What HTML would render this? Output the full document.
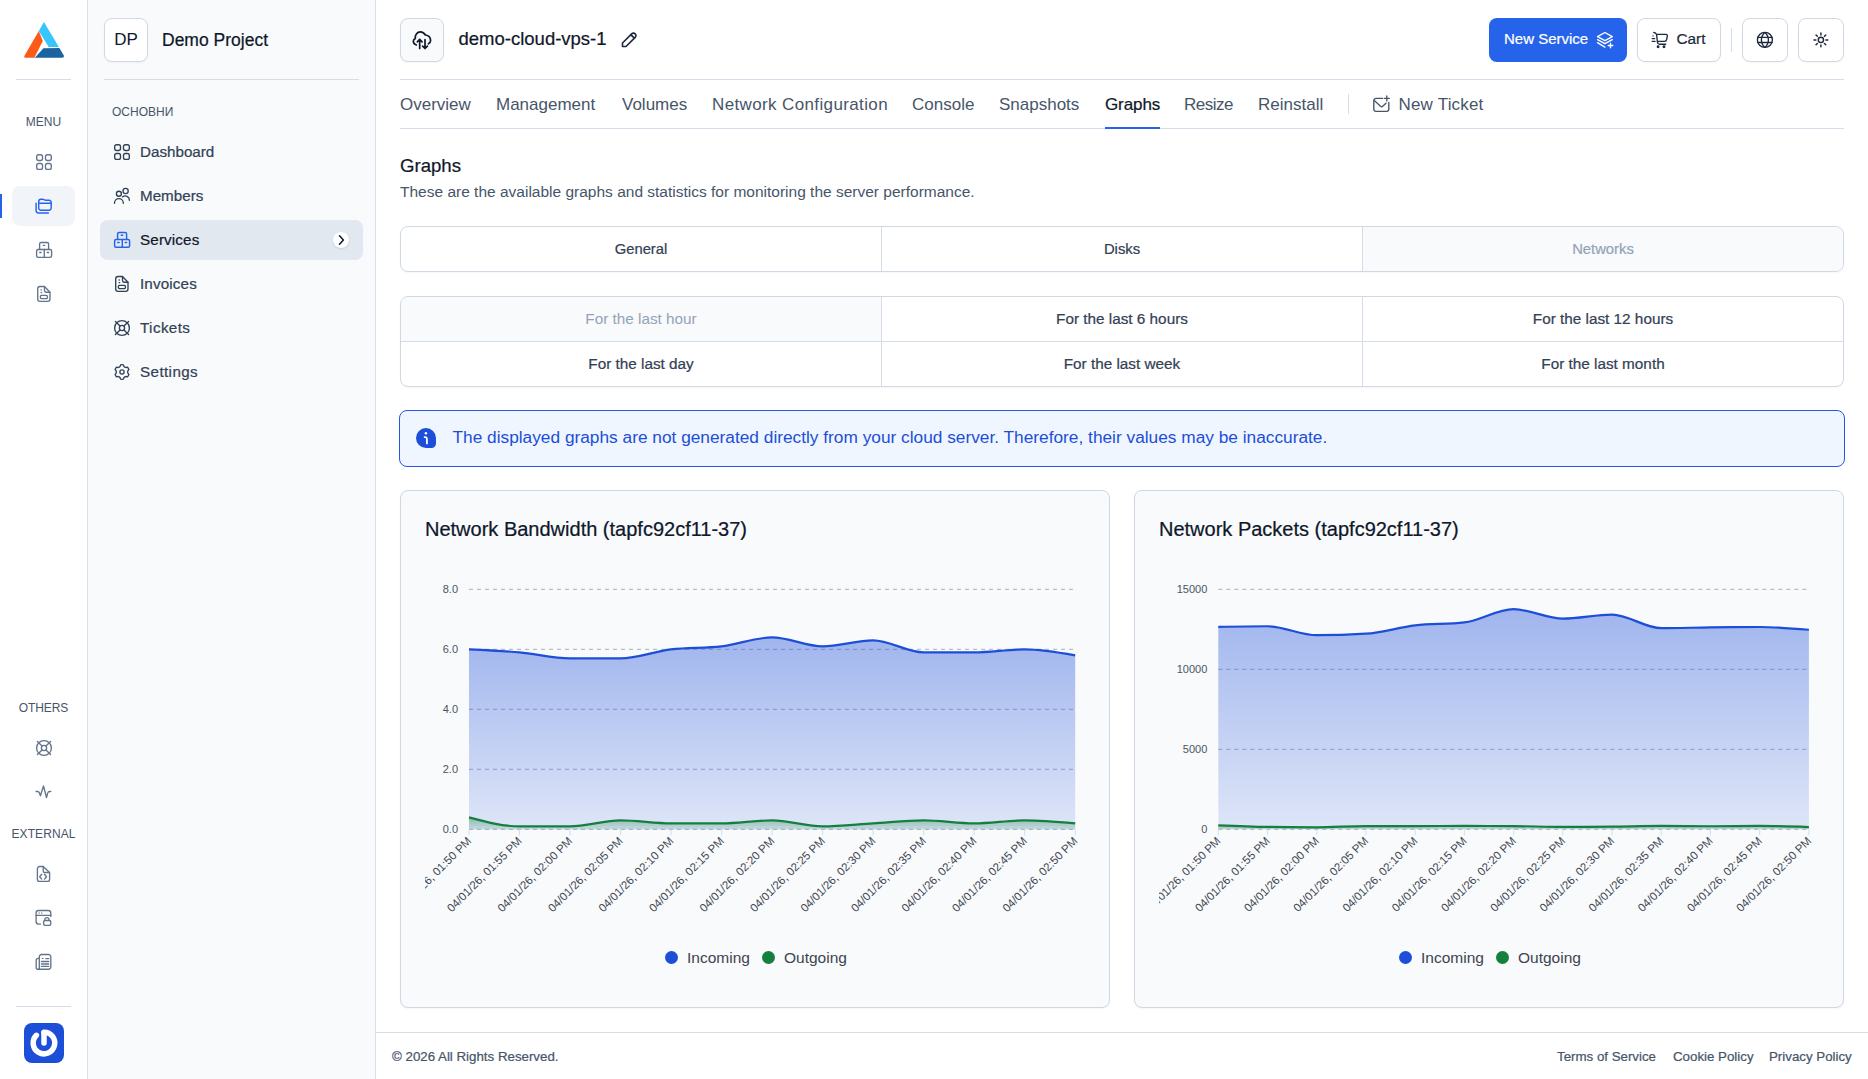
<!DOCTYPE html>
<html><head><meta charset="utf-8">
<style>
*{box-sizing:border-box;margin:0;padding:0}
html,body{width:1868px;height:1079px;overflow:hidden;background:#fff}
body{position:relative;font-family:"Liberation Sans",sans-serif;color:#334155}
.a{position:absolute}
.t{position:absolute;white-space:pre;line-height:1}
.med{-webkit-text-stroke:0.22px currentColor}
svg.i{position:absolute;fill:none;stroke:currentColor;stroke-width:2;stroke-linecap:round;stroke-linejoin:round;overflow:visible}
#rail{left:0;top:0;width:88px;height:1079px;background:#fff;border-right:1px solid #d8e0ea}
#side{left:88px;top:0;width:288px;height:1079px;background:#f8fafc;border-right:1px solid #d8e0ea}
.hr{position:absolute;height:1px;background:#d5dde8}
.vr{position:absolute;width:1px;background:#d5dde8}
.box{position:absolute;border:1px solid #cfd8e3;border-radius:8px;box-shadow:0 1px 2px rgba(15,23,42,0.04)}
.rl{color:#475569;font-size:12px;letter-spacing:0.1px;text-align:center;width:87px;left:0}
.ri{color:#64748b}
.nav{font-size:15.2px;color:#334155;left:52px}
.tab{font-size:17px;color:#475569;top:95.7px}
.cell{position:absolute;display:flex;align-items:center;justify-content:center;font-size:15.3px;color:#334155}
.card{position:absolute;background:#f8fafc;border:1px solid #cfd7e2;border-radius:8px;box-shadow:0 1px 2px rgba(15,23,42,0.04)}
.ctitle{font-size:20px;color:#0f172a}
.ylab{font-family:"Liberation Sans",sans-serif;font-size:11px;fill:#4b5563}
.xlab{font-family:"Liberation Sans",sans-serif;font-size:11.5px;fill:#3f4752}
.dot{position:absolute;width:13px;height:13px;border-radius:50%}
.leg{font-size:15.5px;color:#3d4451}
.foot{font-size:13.3px;color:#475569;top:1049.5px}
</style></head><body>

<!-- ============ RAIL ============ -->
<div id="rail" class="a">
  <svg class="a" style="left:0;top:0" width="88" height="80" viewBox="0 0 88 80">
    <path d="M38.8 31 L42.8 41 L34.3 57.8 L25.4 57.8 Q23.6 57.6 24.3 55.9 Z" fill="#fe5a17"/>
    <path d="M43.9 21.9 L58.9 47.1 L48.7 47 L38.8 31 Z" fill="#36c5fc"/>
    <path d="M43.4 48.2 L59.4 48 L63.8 55.6 Q64.3 57.8 62 57.8 L34.8 57.8 Z" fill="#1b63a0"/>
  </svg>
  <div class="hr" style="left:16px;top:79px;width:55px"></div>
  <div class="t rl" style="top:115.5px">MENU</div>
  <div class="a" style="left:0;top:194px;width:2px;height:24px;background:#2563eb"></div>
  <div class="a" style="left:12px;top:186px;width:63px;height:40px;border-radius:8px;background:#f1f5f9"></div>
  <div class="t rl" style="top:702px;letter-spacing:-0.1px">OTHERS</div>
  <div class="t rl" style="top:828px">EXTERNAL</div>
  <div class="hr" style="left:16px;top:1006px;width:55px"></div>
  <div class="a" style="left:24px;top:1023px;width:40px;height:40px;border-radius:8px;background:#1d4ed8"></div>
  <svg class="a" style="left:24px;top:1023px" width="40" height="40" viewBox="0 0 40 40"><path d="M20 9.2 A10.8 10.8 0 1 1 12.4 12.3" fill="none" stroke="#fff" stroke-width="5.5" stroke-linecap="round"/><path d="M20 9.5 V20" stroke="#fff" stroke-width="5.5" stroke-linecap="round"/></svg>
</div>

<!-- ============ SIDEBAR ============ -->
<div id="side" class="a">
  <div class="box" style="left:16px;top:18px;width:44px;height:44px;background:#fff"></div>
  <div class="t" style="left:16px;top:31px;width:44px;text-align:center;font-size:17px;color:#0f172a">DP</div>
  <div class="t med" style="left:74px;top:32px;font-size:17.5px;color:#0f172a">Demo Project</div>
  <div class="hr" style="left:16px;top:79px;width:255px"></div>
  <div class="t" style="left:24px;top:105.6px;font-size:12px;color:#475569">ОСНОВНИ</div>
  <div class="a" style="left:12px;top:220px;width:263px;height:40px;border-radius:8px;background:#e2e8f0"></div>
  <div class="a" style="left:245px;top:232px;width:16px;height:16px;border-radius:50%;background:#fff;box-shadow:0 1px 2px rgba(15,23,42,.12)"></div>
  <svg class="a" style="left:239px;top:226px" width="28" height="28" viewBox="0 0 28 28" fill="none" stroke="#0f172a" stroke-width="1.5" stroke-linecap="round" stroke-linejoin="round"><path d="M12.5 9.8l3.9 4.2l-3.9 4.2"/></svg>
  <div class="t nav med" style="top:144.4px">Dashboard</div>
  <div class="t nav med" style="top:188.4px">Members</div>
  <div class="t nav med" style="top:232.4px;color:#0f172a;letter-spacing:0.15px">Services</div>
  <div class="t nav med" style="top:276.4px;letter-spacing:0.15px">Invoices</div>
  <div class="t nav med" style="top:320.4px;letter-spacing:0.4px">Tickets</div>
  <div class="t nav med" style="top:364.4px;letter-spacing:0.4px">Settings</div>
</div>


<!-- ============ HEADER ============ -->
<div class="box" style="left:400px;top:18px;width:44px;height:44px;background:#f8fafc"></div>
<div class="t med" style="left:458.5px;top:30px;font-size:18.5px;color:#0f172a">demo-cloud-vps-1</div>

<div class="a" style="left:1489px;top:18px;width:138px;height:44px;border-radius:8px;background:#2563eb"></div>
<div class="t med" style="left:1504px;top:30.8px;font-size:15px;color:#fff">New Service</div>
<div class="box" style="left:1637px;top:18px;width:84px;height:44px;background:#fff"></div>
<div class="t med" style="left:1676.5px;top:30.8px;font-size:15.3px;color:#1e293b">Cart</div>
<div class="vr" style="left:1731px;top:28px;height:24px"></div>
<div class="box" style="left:1742px;top:18px;width:46px;height:44px;background:#fff"></div>
<div class="box" style="left:1798px;top:18px;width:46px;height:44px;background:#fff"></div>
<div class="hr" style="left:400px;top:79px;width:1444px"></div>

<!-- ============ TABS ============ -->
<div class="t tab" style="left:400px">Overview</div>
<div class="t tab" style="left:496px">Management</div>
<div class="t tab" style="left:622px">Volumes</div>
<div class="t tab" style="left:712px;letter-spacing:0.37px">Network Configuration</div>
<div class="t tab" style="left:912px">Console</div>
<div class="t tab" style="left:999px">Snapshots</div>
<div class="t tab med" style="left:1105px;color:#0f172a;letter-spacing:-0.1px">Graphs</div>
<div class="t tab" style="left:1184px;letter-spacing:-0.5px">Resize</div>
<div class="t tab" style="left:1258px">Reinstall</div>
<div class="vr" style="left:1348px;top:94px;height:20px"></div>
<div class="t tab" style="left:1398.5px;letter-spacing:0.19px">New Ticket</div>
<div class="hr" style="left:400px;top:128px;width:1444px"></div>
<div class="a" style="left:1105px;top:127px;width:55px;height:2px;background:#2563eb"></div>

<!-- ============ CONTENT ============ -->
<div class="t med" style="left:400px;top:156.6px;font-size:18.6px;color:#0f172a">Graphs</div>
<div class="t" style="left:400px;top:184.3px;font-size:15.5px;color:#475569">These are the available graphs and statistics for monitoring the server performance.</div>

<div class="box" style="left:400px;top:226px;width:1444px;height:46px;overflow:hidden">
  <div class="cell med" style="left:0;top:0;width:480px;height:44px;font-size:14.8px">General</div>
  <div class="vr" style="left:480px;top:0;height:44px"></div>
  <div class="cell med" style="left:481px;top:0;width:480px;height:44px;font-size:14.8px">Disks</div>
  <div class="vr" style="left:961px;top:0;height:44px"></div>
  <div class="cell med" style="left:962px;top:0;width:480px;height:44px;background:#f8fafc;color:#94a3b8;font-size:14.8px">Networks</div>
</div>

<div class="box" style="left:400px;top:296px;width:1444px;height:91px;overflow:hidden">
  <div class="cell" style="left:0;top:0;width:480px;height:44px;background:#f8fafc;color:#94a3b8">For the last hour</div>
  <div class="cell med" style="left:481px;top:0;width:480px;height:44px">For the last 6 hours</div>
  <div class="cell med" style="left:962px;top:0;width:480px;height:44px">For the last 12 hours</div>
  <div class="cell med" style="left:0;top:45px;width:480px;height:44px">For the last day</div>
  <div class="cell med" style="left:481px;top:45px;width:480px;height:44px">For the last week</div>
  <div class="cell med" style="left:962px;top:45px;width:480px;height:44px">For the last month</div>
  <div class="hr" style="left:0;top:44px;width:1444px"></div>
  <div class="vr" style="left:480px;top:0;height:90px"></div>
  <div class="vr" style="left:961px;top:0;height:90px"></div>
</div>

<div class="a" style="left:399px;top:410px;width:1446px;height:57px;border:1px solid #2558e2;border-radius:8px;background:#eff6ff"></div>
<svg class="a" style="left:416px;top:428px" width="20" height="20" viewBox="0 0 20 20"><path d="M0 10A10 10 0 0 1 20 10V15.5A4.5 4.5 0 0 1 15.5 20H10A10 10 0 0 1 0 10Z" fill="#1d4ed8"/><circle cx="9.9" cy="5.3" r="1.25" fill="#fff"/><path d="M8.6 9.2Q10.9 9 10.9 11V15.4" fill="none" stroke="#fff" stroke-width="1.8" stroke-linecap="round" stroke-linejoin="round"/></svg>
<div class="t" style="left:452.5px;top:429.3px;font-size:17.3px;color:#1d4ed8">The displayed graphs are not generated directly from your cloud server. Therefore, their values may be inaccurate.</div>

<!--CHARTS-->
<div class="card" style="left:400px;top:490px;width:710px;height:518px"></div>
<div class="t med ctitle" style="left:425px;top:519px">Network Bandwidth (tapfc92cf11-37)</div>
<svg class="a" style="left:400px;top:490px;overflow:hidden" width="710" height="518" viewBox="0 0 710 518">
<defs><linearGradient id="gi1" x1="0" y1="0" x2="0" y2="1"><stop offset="0" stop-color="#1d4ed8" stop-opacity="0.40"/><stop offset="1" stop-color="#1d4ed8" stop-opacity="0.12"/></linearGradient><linearGradient id="go1" x1="0" y1="0" x2="0" y2="1"><stop offset="0" stop-color="#15803d" stop-opacity="0.40"/><stop offset="1" stop-color="#15803d" stop-opacity="0.12"/></linearGradient><clipPath id="cl1"><rect x="25" y="0" width="660" height="518"/></clipPath></defs>
<line x1="69.0" y1="99.40" x2="673.2" y2="99.40" stroke="#b6bfcc" stroke-width="1.3" stroke-dasharray="4 4"/>
<text x="58.0" y="103.40" text-anchor="end" class="ylab">8.0</text>
<line x1="69.0" y1="159.40" x2="673.2" y2="159.40" stroke="#b6bfcc" stroke-width="1.3" stroke-dasharray="4 4"/>
<text x="58.0" y="163.40" text-anchor="end" class="ylab">6.0</text>
<line x1="69.0" y1="219.40" x2="673.2" y2="219.40" stroke="#b6bfcc" stroke-width="1.3" stroke-dasharray="4 4"/>
<text x="58.0" y="223.40" text-anchor="end" class="ylab">4.0</text>
<line x1="69.0" y1="279.40" x2="673.2" y2="279.40" stroke="#b6bfcc" stroke-width="1.3" stroke-dasharray="4 4"/>
<text x="58.0" y="283.40" text-anchor="end" class="ylab">2.0</text>
<line x1="69.0" y1="339.40" x2="673.2" y2="339.40" stroke="#b6bfcc" stroke-width="1.3" stroke-dasharray="4 4"/>
<text x="58.0" y="343.40" text-anchor="end" class="ylab">0.0</text>
<path d="M69.00,159.40C85.84,160.15 102.68,160.90 119.52,162.40C136.36,163.90 153.19,168.40 170.03,168.40C186.87,168.40 203.71,168.40 220.55,168.40C237.39,168.40 254.23,161.40 271.07,159.40C287.91,157.40 304.74,158.40 321.58,156.40C338.42,154.40 355.26,147.40 372.10,147.40C388.94,147.40 405.78,156.40 422.62,156.40C439.46,156.40 456.29,150.40 473.13,150.40C489.97,150.40 506.81,162.40 523.65,162.40C540.49,162.40 557.33,162.40 574.17,162.40C591.01,162.40 607.84,159.40 624.68,159.40C641.52,159.40 658.36,162.40 675.20,165.40L675.20,339.40L69.00,339.40Z" fill="url(#gi1)"/>
<path d="M69.00,327.40C85.84,331.90 102.68,336.40 119.52,336.40C136.36,336.40 153.19,336.40 170.03,336.40C186.87,336.40 203.71,330.40 220.55,330.40C237.39,330.40 254.23,333.40 271.07,333.40C287.91,333.40 304.74,333.40 321.58,333.40C338.42,333.40 355.26,330.40 372.10,330.40C388.94,330.40 405.78,336.40 422.62,336.40C439.46,336.40 456.29,334.40 473.13,333.40C489.97,332.40 506.81,330.40 523.65,330.40C540.49,330.40 557.33,333.40 574.17,333.40C591.01,333.40 607.84,330.40 624.68,330.40C641.52,330.40 658.36,331.90 675.20,333.40L675.20,339.40L69.00,339.40Z" fill="url(#go1)"/>
<path d="M69.00,159.40C85.84,160.15 102.68,160.90 119.52,162.40C136.36,163.90 153.19,168.40 170.03,168.40C186.87,168.40 203.71,168.40 220.55,168.40C237.39,168.40 254.23,161.40 271.07,159.40C287.91,157.40 304.74,158.40 321.58,156.40C338.42,154.40 355.26,147.40 372.10,147.40C388.94,147.40 405.78,156.40 422.62,156.40C439.46,156.40 456.29,150.40 473.13,150.40C489.97,150.40 506.81,162.40 523.65,162.40C540.49,162.40 557.33,162.40 574.17,162.40C591.01,162.40 607.84,159.40 624.68,159.40C641.52,159.40 658.36,162.40 675.20,165.40" fill="none" stroke="#1d4ed8" stroke-width="2.2"/>
<path d="M69.00,327.40C85.84,331.90 102.68,336.40 119.52,336.40C136.36,336.40 153.19,336.40 170.03,336.40C186.87,336.40 203.71,330.40 220.55,330.40C237.39,330.40 254.23,333.40 271.07,333.40C287.91,333.40 304.74,333.40 321.58,333.40C338.42,333.40 355.26,330.40 372.10,330.40C388.94,330.40 405.78,336.40 422.62,336.40C439.46,336.40 456.29,334.40 473.13,333.40C489.97,332.40 506.81,330.40 523.65,330.40C540.49,330.40 557.33,333.40 574.17,333.40C591.01,333.40 607.84,330.40 624.68,330.40C641.52,330.40 658.36,331.90 675.20,333.40" fill="none" stroke="#15803d" stroke-width="2.2"/>
<g clip-path="url(#cl1)">
<line x1="69.00" y1="339.4" x2="69.00" y2="345.4" stroke="#d8dde5" stroke-width="1"/>
<text transform="translate(72.10,351.70) rotate(-45)" text-anchor="end" class="xlab">04/01/26, 01:50 PM</text>
<line x1="119.52" y1="339.4" x2="119.52" y2="345.4" stroke="#d8dde5" stroke-width="1"/>
<text transform="translate(122.62,351.70) rotate(-45)" text-anchor="end" class="xlab">04/01/26, 01:55 PM</text>
<line x1="170.03" y1="339.4" x2="170.03" y2="345.4" stroke="#d8dde5" stroke-width="1"/>
<text transform="translate(173.13,351.70) rotate(-45)" text-anchor="end" class="xlab">04/01/26, 02:00 PM</text>
<line x1="220.55" y1="339.4" x2="220.55" y2="345.4" stroke="#d8dde5" stroke-width="1"/>
<text transform="translate(223.65,351.70) rotate(-45)" text-anchor="end" class="xlab">04/01/26, 02:05 PM</text>
<line x1="271.07" y1="339.4" x2="271.07" y2="345.4" stroke="#d8dde5" stroke-width="1"/>
<text transform="translate(274.17,351.70) rotate(-45)" text-anchor="end" class="xlab">04/01/26, 02:10 PM</text>
<line x1="321.58" y1="339.4" x2="321.58" y2="345.4" stroke="#d8dde5" stroke-width="1"/>
<text transform="translate(324.68,351.70) rotate(-45)" text-anchor="end" class="xlab">04/01/26, 02:15 PM</text>
<line x1="372.10" y1="339.4" x2="372.10" y2="345.4" stroke="#d8dde5" stroke-width="1"/>
<text transform="translate(375.20,351.70) rotate(-45)" text-anchor="end" class="xlab">04/01/26, 02:20 PM</text>
<line x1="422.62" y1="339.4" x2="422.62" y2="345.4" stroke="#d8dde5" stroke-width="1"/>
<text transform="translate(425.72,351.70) rotate(-45)" text-anchor="end" class="xlab">04/01/26, 02:25 PM</text>
<line x1="473.13" y1="339.4" x2="473.13" y2="345.4" stroke="#d8dde5" stroke-width="1"/>
<text transform="translate(476.23,351.70) rotate(-45)" text-anchor="end" class="xlab">04/01/26, 02:30 PM</text>
<line x1="523.65" y1="339.4" x2="523.65" y2="345.4" stroke="#d8dde5" stroke-width="1"/>
<text transform="translate(526.75,351.70) rotate(-45)" text-anchor="end" class="xlab">04/01/26, 02:35 PM</text>
<line x1="574.17" y1="339.4" x2="574.17" y2="345.4" stroke="#d8dde5" stroke-width="1"/>
<text transform="translate(577.27,351.70) rotate(-45)" text-anchor="end" class="xlab">04/01/26, 02:40 PM</text>
<line x1="624.68" y1="339.4" x2="624.68" y2="345.4" stroke="#d8dde5" stroke-width="1"/>
<text transform="translate(627.78,351.70) rotate(-45)" text-anchor="end" class="xlab">04/01/26, 02:45 PM</text>
<line x1="675.20" y1="339.4" x2="675.20" y2="345.4" stroke="#d8dde5" stroke-width="1"/>
<text transform="translate(678.30,351.70) rotate(-45)" text-anchor="end" class="xlab">04/01/26, 02:50 PM</text>
</g>
</svg>
<div class="dot" style="left:664.5px;top:951px;background:#1d4ed8"></div>
<div class="t leg" style="left:687px;top:950px">Incoming</div>
<div class="dot" style="left:761.5px;top:951px;background:#15803d"></div>
<div class="t leg" style="left:784px;top:950px">Outgoing</div>
<div class="card" style="left:1134px;top:490px;width:710px;height:518px"></div>
<div class="t med ctitle" style="left:1159px;top:519px">Network Packets (tapfc92cf11-37)</div>
<svg class="a" style="left:1134px;top:490px;overflow:hidden" width="710" height="518" viewBox="0 0 710 518">
<defs><linearGradient id="gi2" x1="0" y1="0" x2="0" y2="1"><stop offset="0" stop-color="#1d4ed8" stop-opacity="0.40"/><stop offset="1" stop-color="#1d4ed8" stop-opacity="0.12"/></linearGradient><linearGradient id="go2" x1="0" y1="0" x2="0" y2="1"><stop offset="0" stop-color="#15803d" stop-opacity="0.40"/><stop offset="1" stop-color="#15803d" stop-opacity="0.12"/></linearGradient><clipPath id="cl2"><rect x="25" y="0" width="660" height="518"/></clipPath></defs>
<line x1="84.3" y1="99.30" x2="672.9" y2="99.30" stroke="#b6bfcc" stroke-width="1.3" stroke-dasharray="4 4"/>
<text x="73.3" y="103.30" text-anchor="end" class="ylab">15000</text>
<line x1="84.3" y1="179.30" x2="672.9" y2="179.30" stroke="#b6bfcc" stroke-width="1.3" stroke-dasharray="4 4"/>
<text x="73.3" y="183.30" text-anchor="end" class="ylab">10000</text>
<line x1="84.3" y1="259.30" x2="672.9" y2="259.30" stroke="#b6bfcc" stroke-width="1.3" stroke-dasharray="4 4"/>
<text x="73.3" y="263.30" text-anchor="end" class="ylab">5000</text>
<line x1="84.3" y1="339.30" x2="672.9" y2="339.30" stroke="#b6bfcc" stroke-width="1.3" stroke-dasharray="4 4"/>
<text x="73.3" y="343.30" text-anchor="end" class="ylab">0</text>
<path d="M84.30,136.90C100.71,136.58 117.11,136.26 133.52,136.26C149.92,136.26 166.33,145.22 182.73,145.22C199.14,145.22 215.54,144.71 231.95,143.70C248.36,142.69 264.76,137.26 281.17,135.38C297.57,133.50 313.98,134.39 330.38,132.42C346.79,130.45 363.19,119.14 379.60,119.14C396.01,119.14 412.41,128.58 428.82,128.58C445.22,128.58 461.63,124.58 478.03,124.58C494.44,124.58 510.84,138.18 527.25,138.18C543.66,138.18 560.06,137.58 576.47,137.38C592.87,137.18 609.28,136.98 625.68,136.98C642.09,136.98 658.49,138.38 674.90,139.78L674.90,339.30L84.30,339.30Z" fill="url(#gi2)"/>
<path d="M84.30,335.30C100.71,335.97 117.11,336.63 133.52,336.90C149.92,337.17 166.33,337.30 182.73,337.30C199.14,337.30 215.54,336.10 231.95,336.10C248.36,336.10 264.76,336.10 281.17,336.10C297.57,336.10 313.98,335.94 330.38,335.94C346.79,335.94 363.19,335.99 379.60,336.10C396.01,336.21 412.41,336.90 428.82,336.90C445.22,336.90 461.63,336.74 478.03,336.58C494.44,336.42 510.84,335.94 527.25,335.94C543.66,335.94 560.06,336.26 576.47,336.26C592.87,336.26 609.28,335.94 625.68,335.94C642.09,335.94 658.49,336.50 674.90,337.06L674.90,339.30L84.30,339.30Z" fill="url(#go2)"/>
<path d="M84.30,136.90C100.71,136.58 117.11,136.26 133.52,136.26C149.92,136.26 166.33,145.22 182.73,145.22C199.14,145.22 215.54,144.71 231.95,143.70C248.36,142.69 264.76,137.26 281.17,135.38C297.57,133.50 313.98,134.39 330.38,132.42C346.79,130.45 363.19,119.14 379.60,119.14C396.01,119.14 412.41,128.58 428.82,128.58C445.22,128.58 461.63,124.58 478.03,124.58C494.44,124.58 510.84,138.18 527.25,138.18C543.66,138.18 560.06,137.58 576.47,137.38C592.87,137.18 609.28,136.98 625.68,136.98C642.09,136.98 658.49,138.38 674.90,139.78" fill="none" stroke="#1d4ed8" stroke-width="2.2"/>
<path d="M84.30,335.30C100.71,335.97 117.11,336.63 133.52,336.90C149.92,337.17 166.33,337.30 182.73,337.30C199.14,337.30 215.54,336.10 231.95,336.10C248.36,336.10 264.76,336.10 281.17,336.10C297.57,336.10 313.98,335.94 330.38,335.94C346.79,335.94 363.19,335.99 379.60,336.10C396.01,336.21 412.41,336.90 428.82,336.90C445.22,336.90 461.63,336.74 478.03,336.58C494.44,336.42 510.84,335.94 527.25,335.94C543.66,335.94 560.06,336.26 576.47,336.26C592.87,336.26 609.28,335.94 625.68,335.94C642.09,335.94 658.49,336.50 674.90,337.06" fill="none" stroke="#15803d" stroke-width="2.2"/>
<g clip-path="url(#cl2)">
<line x1="84.30" y1="339.3" x2="84.30" y2="345.3" stroke="#d8dde5" stroke-width="1"/>
<text transform="translate(87.40,351.60) rotate(-45)" text-anchor="end" class="xlab">04/01/26, 01:50 PM</text>
<line x1="133.52" y1="339.3" x2="133.52" y2="345.3" stroke="#d8dde5" stroke-width="1"/>
<text transform="translate(136.62,351.60) rotate(-45)" text-anchor="end" class="xlab">04/01/26, 01:55 PM</text>
<line x1="182.73" y1="339.3" x2="182.73" y2="345.3" stroke="#d8dde5" stroke-width="1"/>
<text transform="translate(185.83,351.60) rotate(-45)" text-anchor="end" class="xlab">04/01/26, 02:00 PM</text>
<line x1="231.95" y1="339.3" x2="231.95" y2="345.3" stroke="#d8dde5" stroke-width="1"/>
<text transform="translate(235.05,351.60) rotate(-45)" text-anchor="end" class="xlab">04/01/26, 02:05 PM</text>
<line x1="281.17" y1="339.3" x2="281.17" y2="345.3" stroke="#d8dde5" stroke-width="1"/>
<text transform="translate(284.27,351.60) rotate(-45)" text-anchor="end" class="xlab">04/01/26, 02:10 PM</text>
<line x1="330.38" y1="339.3" x2="330.38" y2="345.3" stroke="#d8dde5" stroke-width="1"/>
<text transform="translate(333.48,351.60) rotate(-45)" text-anchor="end" class="xlab">04/01/26, 02:15 PM</text>
<line x1="379.60" y1="339.3" x2="379.60" y2="345.3" stroke="#d8dde5" stroke-width="1"/>
<text transform="translate(382.70,351.60) rotate(-45)" text-anchor="end" class="xlab">04/01/26, 02:20 PM</text>
<line x1="428.82" y1="339.3" x2="428.82" y2="345.3" stroke="#d8dde5" stroke-width="1"/>
<text transform="translate(431.92,351.60) rotate(-45)" text-anchor="end" class="xlab">04/01/26, 02:25 PM</text>
<line x1="478.03" y1="339.3" x2="478.03" y2="345.3" stroke="#d8dde5" stroke-width="1"/>
<text transform="translate(481.13,351.60) rotate(-45)" text-anchor="end" class="xlab">04/01/26, 02:30 PM</text>
<line x1="527.25" y1="339.3" x2="527.25" y2="345.3" stroke="#d8dde5" stroke-width="1"/>
<text transform="translate(530.35,351.60) rotate(-45)" text-anchor="end" class="xlab">04/01/26, 02:35 PM</text>
<line x1="576.47" y1="339.3" x2="576.47" y2="345.3" stroke="#d8dde5" stroke-width="1"/>
<text transform="translate(579.57,351.60) rotate(-45)" text-anchor="end" class="xlab">04/01/26, 02:40 PM</text>
<line x1="625.68" y1="339.3" x2="625.68" y2="345.3" stroke="#d8dde5" stroke-width="1"/>
<text transform="translate(628.78,351.60) rotate(-45)" text-anchor="end" class="xlab">04/01/26, 02:45 PM</text>
<line x1="674.90" y1="339.3" x2="674.90" y2="345.3" stroke="#d8dde5" stroke-width="1"/>
<text transform="translate(678.00,351.60) rotate(-45)" text-anchor="end" class="xlab">04/01/26, 02:50 PM</text>
</g>
</svg>
<div class="dot" style="left:1398.5px;top:951px;background:#1d4ed8"></div>
<div class="t leg" style="left:1421px;top:950px">Incoming</div>
<div class="dot" style="left:1495.5px;top:951px;background:#15803d"></div>
<div class="t leg" style="left:1518px;top:950px">Outgoing</div>
<!--/CHARTS-->

<!-- ============ FOOTER ============ -->
<div class="hr" style="left:376px;top:1032px;width:1492px"></div>
<div class="t foot med" style="left:392px">© 2026 All Rights Reserved.</div>
<div class="t foot med" style="left:1557px">Terms of Service</div>
<div class="t foot med" style="left:1673px">Cookie Policy</div>
<div class="t foot med" style="left:1769px">Privacy Policy</div>

<!--ICONS-->
<svg class="a" style="left:29.6px;top:148px;" width="28" height="28" viewBox="0 0 28 28" fill="none" stroke="#64748b" stroke-width="1.35" stroke-linecap="round" stroke-linejoin="round"><rect x="6.7" y="6.7" width="5.8" height="5.8" rx="1.9"/><rect x="15.5" y="6.7" width="5.8" height="5.8" rx="1.9"/><rect x="6.7" y="15.5" width="5.8" height="5.8" rx="1.9"/><rect x="15.5" y="15.5" width="5.8" height="5.8" rx="1.9"/></svg>
<svg class="a" style="left:29.6px;top:192px;" width="28" height="28" viewBox="0 0 28 28" fill="none" stroke="#2563eb" stroke-width="1.45" stroke-linecap="round" stroke-linejoin="round"><path d="M8.7 11.2V16a2.2 2.2 0 0 0 2.2 2.2h8.1a2.2 2.2 0 0 0 2.2 -2.2v-4.8a2.3 2.3 0 0 0 -2.3 -2.9h-3.2c-1 0 -1.6 -1 -3.3 -1h-1.4a2.4 2.4 0 0 0 -2.3 2.4z"/><path d="M8.7 11.2h12.5"/><path d="M6.1 11.2v7.4a2.4 2.4 0 0 0 2.4 2.4h9.9"/></svg>
<svg class="a" style="left:29.6px;top:236px;" width="28" height="28" viewBox="0 0 28 28" fill="none" stroke="#64748b" stroke-width="1.35" stroke-linecap="round" stroke-linejoin="round"><path d="M9.6 13V8a1.5 1.5 0 0 1 1.5 -1.5h6a1.5 1.5 0 0 1 1.5 1.5v5"/><path d="M6.6 15a1.5 1.5 0 0 1 1.5 -1.5h12a1.5 1.5 0 0 1 1.5 1.5v4.8a1.5 1.5 0 0 1 -1.5 1.5h-12a1.5 1.5 0 0 1 -1.5 -1.5z"/><path d="M14.3 13.5v7.8"/><path d="M13.3 9.3h1.4M9.8 16.5h1.3M17.3 16.5h1.3"/></svg>
<svg class="a" style="left:29.6px;top:280px;" width="28" height="28" viewBox="0 0 28 28" fill="none" stroke="#64748b" stroke-width="1.35" stroke-linecap="round" stroke-linejoin="round"><path d="M14.5 6.5H10a2.3 2.3 0 0 0 -2.3 2.3v10.3a2.3 2.3 0 0 0 2.3 2.3h7.7a2.3 2.3 0 0 0 2.3 -2.3V12.2z"/><path d="M14.5 6.7v3.9a1.6 1.6 0 0 0 1.6 1.6h3.8"/><path d="M11.1 10h.2M11.1 12.6h.6"/><rect x="10.4" y="15.3" width="7" height="3.3" rx="1"/></svg>
<svg class="a" style="left:29.6px;top:734px;" width="28" height="28" viewBox="0 0 28 28" fill="none" stroke="#64748b" stroke-width="1.35" stroke-linecap="round" stroke-linejoin="round"><circle cx="14" cy="14" r="7.4"/><circle cx="14" cy="14" r="2.6"/><path d="M7.4 7.4l4.4 4.4M20.6 7.4l-4.4 4.4M7.4 20.6l4.4 -4.4M20.6 20.6l-4.4 -4.4"/></svg>
<svg class="a" style="left:29.6px;top:778px;" width="28" height="28" viewBox="0 0 28 28" fill="none" stroke="#64748b" stroke-width="1.35" stroke-linecap="round" stroke-linejoin="round"><path d="M6.1 13.5h1.3c1.1 0 1.7 .6 2 1.6l1 2.6l3.1 -9.7l3 11.5l1.1 -4.1c.3 -1.1 .9 -1.9 2.1 -1.9h1.1"/></svg>
<svg class="a" style="left:29.6px;top:860px;" width="28" height="28" viewBox="0 0 28 28" fill="none" stroke="#64748b" stroke-width="1.35" stroke-linecap="round" stroke-linejoin="round"><path d="M13.2 6.5H9.6a2.2 2.2 0 0 0 -2.2 2.2v10.5a2.2 2.2 0 0 0 2.2 2.2h7.8a2.2 2.2 0 0 0 2.2 -2.2V12.5z"/><path d="M13.2 6.7v4.2a1.6 1.6 0 0 0 1.6 1.6h4.6"/><path d="M11.7 14.3l-2 2.4l2 2.4M14.5 14.3l2 2.4l-2 2.4"/></svg>
<svg class="a" style="left:29.6px;top:904px;" width="28" height="28" viewBox="0 0 28 28" fill="none" stroke="#64748b" stroke-width="1.35" stroke-linecap="round" stroke-linejoin="round"><path d="M10.6 20.1H8.6a2.5 2.5 0 0 1 -2.5 -2.5V9a2.5 2.5 0 0 1 2.5 -2.5h9.7a2.5 2.5 0 0 1 2.5 2.5v3.4"/><path d="M6.1 11.4h14.6"/><path d="M9.1 8.9v.2M11.8 8.9v.2"/><rect x="13.6" y="16.5" width="7.2" height="4.8" rx="1.5"/><path d="M14.8 16.5v-.8a2.1 2.1 0 0 1 4.2 0v.8"/></svg>
<svg class="a" style="left:29.6px;top:948px;" width="28" height="28" viewBox="0 0 28 28" fill="none" stroke="#64748b" stroke-width="1.35" stroke-linecap="round" stroke-linejoin="round"><path d="M9.3 21V8.7a2.2 2.2 0 0 1 2.2 -2.2h7.1a2.2 2.2 0 0 1 2.2 2.2v10.3a2.2 2.2 0 0 1 -2.2 2.2H7.9"/><path d="M9.3 10.4H8a1.8 1.8 0 0 0 -1.8 1.8v7.3a1.6 1.6 0 0 0 3.1 0.8"/><path d="M12.4 10.3h.6M15.8 10.6h2.9M11.4 13.5h7.3M11.4 16h7.3M11.4 18.4h7.3"/></svg>
<svg class="a" style="left:108px;top:138px;" width="28" height="28" viewBox="0 0 28 28" fill="none" stroke="#334155" stroke-width="1.35" stroke-linecap="round" stroke-linejoin="round"><rect x="6.7" y="6.7" width="5.8" height="5.8" rx="1.9"/><rect x="15.5" y="6.7" width="5.8" height="5.8" rx="1.9"/><rect x="6.7" y="15.5" width="5.8" height="5.8" rx="1.9"/><rect x="15.5" y="15.5" width="5.8" height="5.8" rx="1.9"/></svg>
<svg class="a" style="left:108px;top:182px;" width="28" height="28" viewBox="0 0 28 28" fill="none" stroke="#334155" stroke-width="1.35" stroke-linecap="round" stroke-linejoin="round"><circle cx="10.9" cy="11.7" r="2.5"/><path d="M6.5 21.3v-0.3a4.4 4.4 0 0 1 8.8 0v0.3"/><circle cx="17.6" cy="9" r="2.6"/><path d="M14.6 14.9a4.2 4.2 0 0 1 6.8 3.4"/></svg>
<svg class="a" style="left:108px;top:226px;" width="28" height="28" viewBox="0 0 28 28" fill="none" stroke="#2563eb" stroke-width="1.45" stroke-linecap="round" stroke-linejoin="round"><path d="M9.6 13V8a1.5 1.5 0 0 1 1.5 -1.5h6a1.5 1.5 0 0 1 1.5 1.5v5"/><path d="M6.6 15a1.5 1.5 0 0 1 1.5 -1.5h12a1.5 1.5 0 0 1 1.5 1.5v4.8a1.5 1.5 0 0 1 -1.5 1.5h-12a1.5 1.5 0 0 1 -1.5 -1.5z"/><path d="M14.3 13.5v7.8"/><path d="M13.3 9.3h1.4M9.8 16.5h1.3M17.3 16.5h1.3"/></svg>
<svg class="a" style="left:108px;top:270px;" width="28" height="28" viewBox="0 0 28 28" fill="none" stroke="#334155" stroke-width="1.35" stroke-linecap="round" stroke-linejoin="round"><path d="M14.5 6.5H10a2.3 2.3 0 0 0 -2.3 2.3v10.3a2.3 2.3 0 0 0 2.3 2.3h7.7a2.3 2.3 0 0 0 2.3 -2.3V12.2z"/><path d="M14.5 6.7v3.9a1.6 1.6 0 0 0 1.6 1.6h3.8"/><path d="M11.1 10h.2M11.1 12.6h.6"/><rect x="10.4" y="15.3" width="7" height="3.3" rx="1"/></svg>
<svg class="a" style="left:108px;top:314px;" width="28" height="28" viewBox="0 0 28 28" fill="none" stroke="#334155" stroke-width="1.35" stroke-linecap="round" stroke-linejoin="round"><circle cx="14" cy="14" r="7.4"/><circle cx="14" cy="14" r="2.6"/><path d="M7.4 7.4l4.4 4.4M20.6 7.4l-4.4 4.4M7.4 20.6l4.4 -4.4M20.6 20.6l-4.4 -4.4"/></svg>
<svg class="a" style="left:108px;top:358px;" width="28" height="28" viewBox="0 0 28 28" fill="none" stroke="#334155" stroke-width="1.35" stroke-linecap="round" stroke-linejoin="round"><path d="M12.61 6.83A7.3 7.3 0 0 1 15.39 6.83Q16.15 10.28 19.51 9.21A7.3 7.3 0 0 1 20.90 11.62Q18.30 14.00 20.90 16.38A7.3 7.3 0 0 1 19.51 18.79Q16.15 17.72 15.39 21.17A7.3 7.3 0 0 1 12.61 21.17Q11.85 17.72 8.49 18.79A7.3 7.3 0 0 1 7.10 16.38Q9.70 14.00 7.10 11.62A7.3 7.3 0 0 1 8.49 9.21Q11.85 10.28 12.61 6.83Z"/><circle cx="14" cy="14" r="2.1"/></svg>
<svg class="a" style="left:405px;top:22px" width="36" height="36" viewBox="0 0 36 36" fill="none" stroke="#0f172a" stroke-width="1.7" stroke-linecap="round" stroke-linejoin="round"><path d="M11.4 23C9.3 22.3 8.3 21 8.3 19.3C8.3 18 9.1 17 10.3 16.4C9.9 12.7 12.3 9.8 15.3 9.8C17.6 9.8 19.3 11.1 20.4 13C23.4 13.5 25.6 15.8 25.6 18.5C25.6 20 24.8 21.1 23.4 21.8"/><path d="M14.7 26.4V17.5M12.3 19.8L14.7 17.4L17.1 19.8"/><path d="M20 17.7V26.4M17.6 24.1L20 26.5L22.4 24.1"/></svg>
<svg class="a" style="left:619px;top:29px" width="21" height="21" viewBox="0 0 24 24" fill="none" stroke="#1e293b" stroke-width="1.85" stroke-linecap="round" stroke-linejoin="round"><path d="M4 20h4l10.5 -10.5a2.828 2.828 0 1 0 -4 -4l-10.5 10.5v4"/><path d="M13.5 6.5l4 4"/></svg>
<svg class="a" style="left:1590px;top:26px" width="30" height="30" viewBox="0 0 30 30" fill="none" stroke="#ffffff" stroke-width="1.35" stroke-linecap="round" stroke-linejoin="round"><path d="M7.5 10.6L14.9 6.5L22.3 10.6L14.9 14.6Z"/><path d="M7.5 13.6L14.9 17.7L22.3 13.6"/><path d="M7.5 16.7L14.9 21.1"/><path d="M20.5 17.2V21.8M18.2 19.5H22.8"/></svg>
<svg class="a" style="left:1646px;top:26px" width="30" height="30" viewBox="0 0 30 30" fill="none" stroke="#1e293b" stroke-width="1.35" stroke-linecap="round" stroke-linejoin="round"><path d="M7.8 6.5C9.3 6.5 10.2 7.4 10.6 8.6L11.4 16C11.6 17.4 12.5 18.2 13.6 18.2H19.7"/><path d="M10.9 8.4H20C20.9 8.4 21.5 9.2 21.3 10.2L20.6 13.6C20.4 14.6 19.6 15.3 18.6 15.3H11.9"/><circle cx="12.1" cy="20.8" r="0.8"/><circle cx="18" cy="20.8" r="0.8"/><path d="M7 9.9h.1M6.2 12.6H8.6M6.2 15.4H9"/></svg>
<svg class="a" style="left:1750px;top:26px" width="30" height="30" viewBox="0 0 30 30" fill="none" stroke="#1e293b" stroke-width="1.35" stroke-linecap="round" stroke-linejoin="round"><circle cx="14.9" cy="13.9" r="7.5"/><path d="M7.8 11.4H22M7.8 16.5H22"/><path d="M14.9 6.5C12.5 8.6 11.4 11.2 11.4 13.9C11.4 16.6 12.5 19.2 14.9 21.3C17.3 19.2 18.4 16.6 18.4 13.9C18.4 11.2 17.3 8.6 14.9 6.5Z"/></svg>
<svg class="a" style="left:1806px;top:26px" width="30" height="30" viewBox="0 0 30 30" fill="none" stroke="#1e293b" stroke-width="1.45" stroke-linecap="round" stroke-linejoin="round"><circle cx="14.9" cy="13.9" r="2.6"/><path d="M19.90 13.90L21.80 13.90M18.44 17.44L19.78 18.78M14.90 18.90L14.90 20.80M11.36 17.44L10.02 18.78M9.90 13.90L8.00 13.90M11.36 10.36L10.02 9.02M14.90 8.90L14.90 7.00M18.44 10.36L19.78 9.02"/></svg>
<svg class="a" style="left:1366px;top:90px" width="30" height="30" viewBox="0 0 30 30" fill="none" stroke="#475569" stroke-width="1.35" stroke-linecap="round" stroke-linejoin="round"><path d="M16.5 8.3H10A2.2 2.2 0 0 0 7.8 10.5V19.1A2.2 2.2 0 0 0 10 21.3H20.6A2.2 2.2 0 0 0 22.8 19.1V12.3"/><path d="M8.6 10.8L14.5 16.2A1.6 1.6 0 0 0 16.7 16.2L20 13.2"/><path d="M20.8 5.9V10.9M18.3 8.4H23.3"/></svg>
<!--/ICONS-->
</body></html>
